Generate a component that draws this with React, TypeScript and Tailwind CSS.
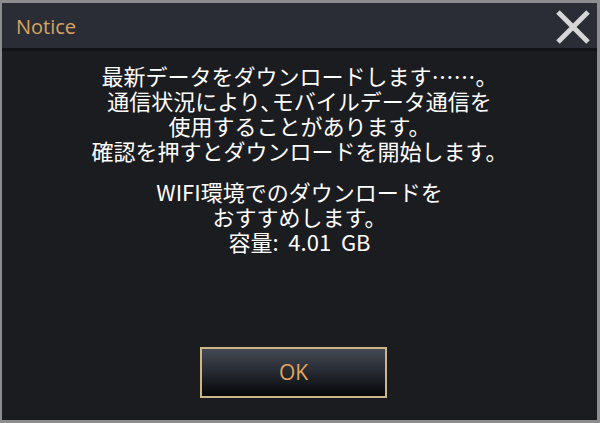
export default function App() {
  return (
    <div className="w-[600px] h-[423px] bg-[#8d8d8f] pt-[3px] pl-[2px] pr-[3px] pb-[3px]" style={{ fontFamily: '"Noto Sans CJK JP", "Noto Sans", sans-serif' }}>
      <div className="flex h-full flex-col bg-[#1b1c20]">
        <div className="flex h-[48px] items-center justify-between bg-[#2a2d36] pl-[14px] pr-[6px] pt-[2px] border-b-[3px] border-[#121317]">
          <span className="text-[20px] text-[#d9a35f] leading-none" style={{ fontFamily: '"Open Sans", "Noto Sans", sans-serif' }}>Notice</span>
          <svg width="36" height="36" viewBox="0 0 36 36">
            <path d="M3 3 L33 33 M33 3 L3 33" stroke="#d6d6d6" strokeWidth="5" strokeLinecap="butt" />
          </svg>
        </div>
        <div className="flex flex-1 flex-col items-center pt-[12px] text-center text-white text-[22px] leading-[25px]">
          <p>最新データをダウンロードします……。</p>
          <p>通信状況により､モバイルデータ通信を</p>
          <p>使用することがあります。</p>
          <p>確認を押すとダウンロードを開始します。</p>
          <div className="mt-[16px]">
            <p>WIFI環境でのダウンロードを</p>
            <p>おすすめします。</p>
            <p className="whitespace-pre">容量:  4.01  GB</p>
          </div>
          <button className="mt-auto mb-[22px] mr-[12px] flex h-[51px] w-[187px] items-center justify-center border-[2px] border-[#cdb683] bg-gradient-to-b from-[#434955] via-[#252930] to-[#07080b] text-[21px] text-[#e0a560]" style={{ fontFamily: '"Open Sans", "Noto Sans", sans-serif' }}>
            OK
          </button>
        </div>
      </div>
    </div>
  );
}
